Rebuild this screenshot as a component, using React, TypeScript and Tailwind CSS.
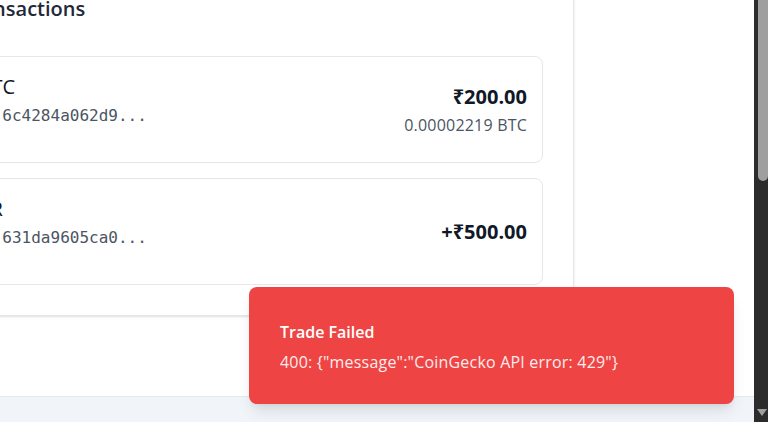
import React from 'react';

type Txn = {
  title: string;
  hash: string;
  date: string;
  amount: string;
  sub?: string;
  tight?: boolean;
};

const txns: Txn[] = [
  { title: 'Bought BTC', hash: 'Txn hash: 6c4284a062d9...', date: '2 Dec', amount: '₹200.00', sub: '0.00002219 BTC' },
  { title: 'Added INR', hash: 'Txn hash: 631da9605ca0...', date: '2 Dec', amount: '+₹500.00', tight: true },
];

const sans = "font-['Open_Sans','Noto_Sans',sans-serif]";

function TxnCard({ t }: { t: Txn }) {
  return (
    <div className="flex h-[107px] justify-between rounded-lg border border-[#e5e7eb] bg-white px-[15px]">
      <div className="flex flex-col pt-[16px]">
        <span
          className={`text-[20px] leading-[28px] font-medium text-[#111827] whitespace-nowrap ${
            t.tight ? 'tracking-[-0.25px]' : ''
          }`}
        >
          {t.title}
        </span>
        <span className="mt-[3px] font-['DejaVu_Sans_Mono',monospace] text-[16px] leading-[24px] text-[#4b5563] whitespace-pre">
          {t.hash}
        </span>
        <span className="text-[14px] leading-[20px] text-[#6b7280]">{t.date}</span>
      </div>
      <div className="flex flex-col items-end self-center">
        <span className="text-[20px] leading-[28px] font-bold text-[#111827]">{t.amount}</span>
        {t.sub && (
          <span className="mt-[2px] text-[16px] leading-[24px] tracking-[0.2px] text-[#4b5563]">{t.sub}</span>
        )}
      </div>
    </div>
  );
}

export default function App() {
  return (
    <div className={`relative flex h-[422px] w-[768px] overflow-hidden bg-[#f1f5f9] ${sans}`}>
      <div className="flex-1 overflow-hidden">
        <div className="flex h-[397px] border-b border-[#e2e8f0] bg-white">
          <div className="ml-[-141px] mt-[-36px] w-[715px] shrink-0 self-start rounded-lg border border-[#e5e7eb] bg-white p-[30px] shadow-sm">
            <h2 className="mb-[33px] text-[20px] leading-[28px] font-semibold text-[#1f2937] whitespace-nowrap">
              Recent Transactions
            </h2>
            <div className="flex flex-col gap-[15px]">
              {txns.map((t) => (
                <TxnCard key={t.hash} t={t} />
              ))}
            </div>
          </div>
          <div className="flex-1" />
        </div>
      </div>

      {/* scrollbar */}
      <div className="relative w-[14px] shrink-0 bg-[#2c2c2c]">
        <div className="ml-[4px] h-[181px] rounded-b-[5px] bg-[#9f9f9f]" />
        <svg className="absolute left-[3px] top-[409px]" width="10" height="8" viewBox="0 0 10 8">
          <path d="M0 0 H10 L5 7 Z" fill="#9f9f9f" />
        </svg>
      </div>

      {/* toast */}
      <div className="absolute left-[249px] top-[287px] h-[117px] w-[485px] rounded-lg bg-[#ef4444] px-[31px] pt-[33px] text-white shadow-lg">
        <div className="flex flex-col gap-[6px]">
          <span className="text-[16px] leading-[24px] font-semibold">Trade Failed</span>
          <span className="text-[16px] leading-[24px] tracking-[0.2px] opacity-90">
            400: {'{"message":"CoinGecko API error: 429"}'}
          </span>
        </div>
      </div>
    </div>
  );
}
